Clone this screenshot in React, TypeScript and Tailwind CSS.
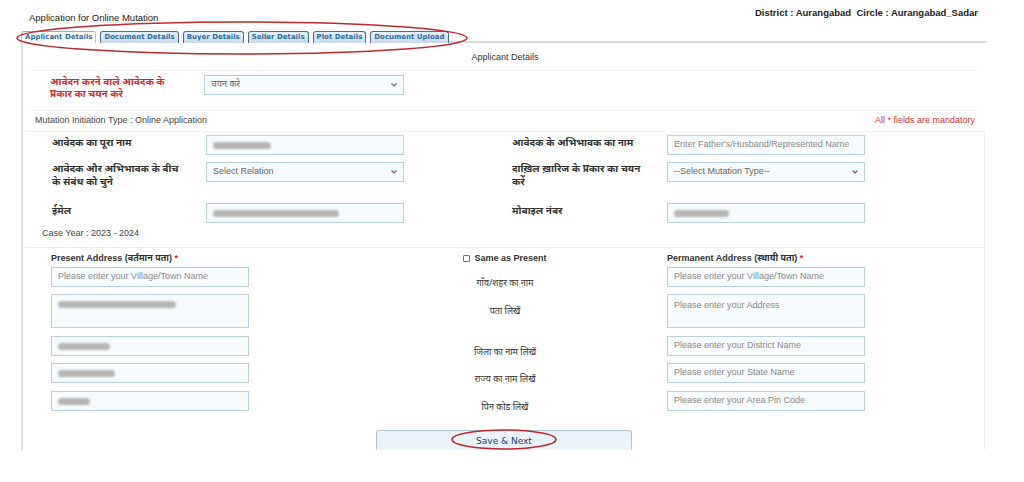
import React from "react";

const tabs = ["Applicant Details", "Document Details", "Buyer Details", "Seller Details", "Plot Details", "Document Upload"];

const sans = { fontFamily: '"Liberation Sans", Arial, "Noto Sans", sans-serif' };
const hindi = { fontFamily: '"Noto Sans", "Liberation Sans", sans-serif' };
const verdana = { fontFamily: '"DejaVu Sans", Verdana, sans-serif' };

function Blur({ w, className = "" }: { w: number; className?: string }) {
  return <span className={`block h-[7px] rounded-full bg-[#b5b5b5] blur-[1px] ${className}`} style={{ width: w }} />;
}

function TextBox({ children, h = "h-[20px]", top = false }: { children?: React.ReactNode; h?: string; top?: boolean }) {
  return (
    <div
      className={`w-[198px] ${h} flex ${top ? "items-start pt-[4px]" : "items-center"} border border-[#b9d3dc] bg-[#f6fbfd] px-[6px] text-[9px] text-[#8a8a8a]`}
      style={sans}
    >
      {children}
    </div>
  );
}

function Select({ label, w = "w-[198px]" }: { label: string; w?: string }) {
  return (
    <div className={`${w} h-[20px] flex items-center justify-between border border-[#b9d3dc] bg-[#f6fbfd] pl-[6px] pr-[5px] text-[9px] text-[#666]`} style={sans}>
      <span>{label}</span>
      <svg width="8" height="6" viewBox="0 0 8 6" fill="none" stroke="#666" strokeWidth="1.2">
        <path d="M1.5 1.5 4 4l2.5-2.5" />
      </svg>
    </div>
  );
}

const addressRows = [
  { label: "गाँव/शहर का नाम", right: "Please enter your Village/Town Name", h: "h-[20px]", mt: "mt-0" },
  { label: "पता लिखें", right: "Please enter your Address", h: "h-[34px]", mt: "mt-[7px]", top: true },
  { label: "जिला का नाम लिखें", right: "Please enter your District Name", h: "h-[20px]", mt: "mt-[8px]" },
  { label: "राज्य का नाम लिखें", right: "Please enter your State Name", h: "h-[20px]", mt: "mt-[7px]" },
  { label: "पिन कोड लिखें", right: "Please enter your Area Pin Code", h: "h-[20px]", mt: "mt-[8px]" },
];

export default function App() {
  const leftValues = [
    <span key="v">Please enter your Village/Town Name</span>,
    <Blur key="a" w={118} className="mt-[2px]" />,
    <Blur key="d" w={52} />,
    <Blur key="s" w={57} />,
    <Blur key="p" w={32} />,
  ];

  return (
    <div className="relative w-[1024px] h-[482px] bg-white text-[#333] overflow-hidden" style={sans}>
      {/* header */}
      <div className="h-[24px] flex justify-between pt-[6px] pr-[46px]">
        <div className="pl-[29px] pt-[5px] text-[9.5px] text-[#222]">Application for Online Mutation</div>
        <div className="text-[9.5px] font-bold text-[#222]">District : Aurangabad&nbsp;&nbsp;Circle : Aurangabad_Sadar</div>
      </div>

      {/* tabs */}
      <div className="mt-[7px] ml-[21px] mr-[37px] flex items-end">
        <div className="flex gap-[4px]" style={verdana}>
          {tabs.map((t, i) => (
            <div
              key={t}
              className={`h-[12px] px-[3px] flex items-center text-[7px] font-bold border border-b-0 rounded-t-[3px] text-[#2e6ea6] ${
                i === 0 ? "bg-white border-[#d8c08a] border-t-[#e0a040]" : "bg-gradient-to-b from-[#e6f0f9] to-[#c7d9ec] border-[#4f6f90]"
              }`}
            >
              {t}
            </div>
          ))}
        </div>
        <div className="flex-1 border-b-[2px] border-[#dcdcdc]" />
      </div>

      {/* main panel */}
      <div className="ml-[21px] mr-[37px] h-[407px] border-l-[2px] border-[#e0e0e0] overflow-hidden">
        <div className="pt-[9px] h-[20px] text-center text-[9px] leading-[11px] text-[#333]">Applicant Details</div>
        <div className="mt-[7px] ml-[8px] mr-[10px] border-t border-[#f0f0f0]" />
        <div className="flex items-start pt-[4px] h-[39px]">
          <div className="ml-[27px] w-[154px]" style={hindi}>
            <div className="w-[122px] text-[10px] leading-[12px] font-bold text-[#d42a2a]">आवेदन करने वाले आवेदक के प्रकार का चयन करे</div>
          </div>
          <Select label="चयन करे" w="w-[200px]" />
        </div>
        <div className="ml-[8px] mr-[10px] border-t border-[#f0f0f0]" />
        <div className="flex justify-between items-center pl-[12px] pr-[12px] h-[20px] text-[9px]">
          <span className="text-[#444]">Mutation Initiation Type : Online Application</span>
          <span className="text-[#d43030]">All * fields are mandatory</span>
        </div>

        <div className="ml-[2px] mr-[2px] border-t border-r border-[#f0f0f0]">
          <div className="flex h-[27px] pt-[3px]" style={hindi}>
            <div className="ml-[27px] w-[154px] text-[10px] font-bold text-[#333]">आवेदक का पूरा नाम</div>
            <TextBox><Blur w={58} /></TextBox>
            <div className="ml-[108px] w-[155px] text-[10px] font-bold text-[#333]">आवेदक के अभिभावक का नाम</div>
            <TextBox>Enter Father's/Husband/Represented Name</TextBox>
          </div>
          <div className="flex h-[41px] pt-[3px]" style={hindi}>
            <div className="ml-[27px] w-[154px]">
              <div className="w-[134px] text-[10px] leading-[13px] font-bold text-[#333]">आवेदक और अभिभावक के बीच के संबंध को चुने</div>
            </div>
            <Select label="Select Relation" />
            <div className="ml-[108px] w-[155px]">
              <div className="w-[132px] text-[10px] leading-[13px] font-bold text-[#333]">दाख़िल ख़ारिज के प्रकार का चयन करें</div>
            </div>
            <Select label="--Select Mutation Type--" />
          </div>
          <div className="flex h-[25px] pt-[3px]" style={hindi}>
            <div className="ml-[27px] w-[154px] text-[10px] font-bold text-[#333]">ईमेल</div>
            <TextBox><Blur w={126} /></TextBox>
            <div className="ml-[108px] w-[155px] text-[10px] font-bold text-[#333]">मोबाइल नंबर</div>
            <TextBox><Blur w={55} /></TextBox>
          </div>
          <div className="pl-[17px] h-[22px] pt-[3px] text-[9px] leading-[11px] text-[#444]">Case Year : 2023 - 2024</div>

          <div className="border-t border-[#ececec] pt-[4px]">
            <div className="flex h-[13px] items-center text-[9px] font-bold text-[#333]">
              <div className="ml-[26px] w-[198px]">
                Present Address (वर्तमान पता) <span className="text-[#d42a2a]">*</span>
              </div>
              <div className="ml-[131px] w-[250px] flex items-center justify-center gap-[4px]">
                <span className="inline-block w-[7px] h-[7px] border border-[#777] rounded-[1px]" />
                Same as Present
              </div>
              <div className="ml-[37px] w-[198px]">
                Permanent Address (स्थायी पता) <span className="text-[#d42a2a]">*</span>
              </div>
            </div>

            <div className="flex flex-col mt-[2px]">
              {addressRows.map((r, i) => (
                <div key={i} className={`flex ${r.h} ${r.mt}`}>
                  <div className="ml-[26px]"><TextBox h={r.h} top={r.top}>{leftValues[i]}</TextBox></div>
                  <div className={`ml-[131px] w-[250px] h-full text-center text-[9px] leading-[12px] text-[#333] ${i === 1 ? "pt-[11px]" : "pt-[10px]"}`} style={hindi}>
                    {r.label}
                  </div>
                  <div className="ml-[37px]"><TextBox h={r.h} top={r.top}>{r.right}</TextBox></div>
                </div>
              ))}
            </div>

            <div className="mt-[19px] flex">
              <div
                className="ml-[351px] w-[256px] h-[24px] flex justify-center pt-[4px] border border-b-0 border-[#a9c6dc] rounded-t-[3px] bg-[#eaf3fb] text-[9px] text-[#1e3f70]"
                style={verdana}
              >
                Save &amp; Next
              </div>
            </div>
          </div>
        </div>
      </div>

      {/* red annotation ellipses */}
      <svg className="absolute left-0 top-0 pointer-events-none" width="1024" height="482">
        <ellipse cx="242" cy="38" rx="225" ry="16" fill="none" stroke="#c0282d" strokeWidth="1.5" />
        <ellipse cx="504" cy="439.5" rx="52" ry="9.5" fill="none" stroke="#c0282d" strokeWidth="1.5" />
      </svg>
    </div>
  );
}
